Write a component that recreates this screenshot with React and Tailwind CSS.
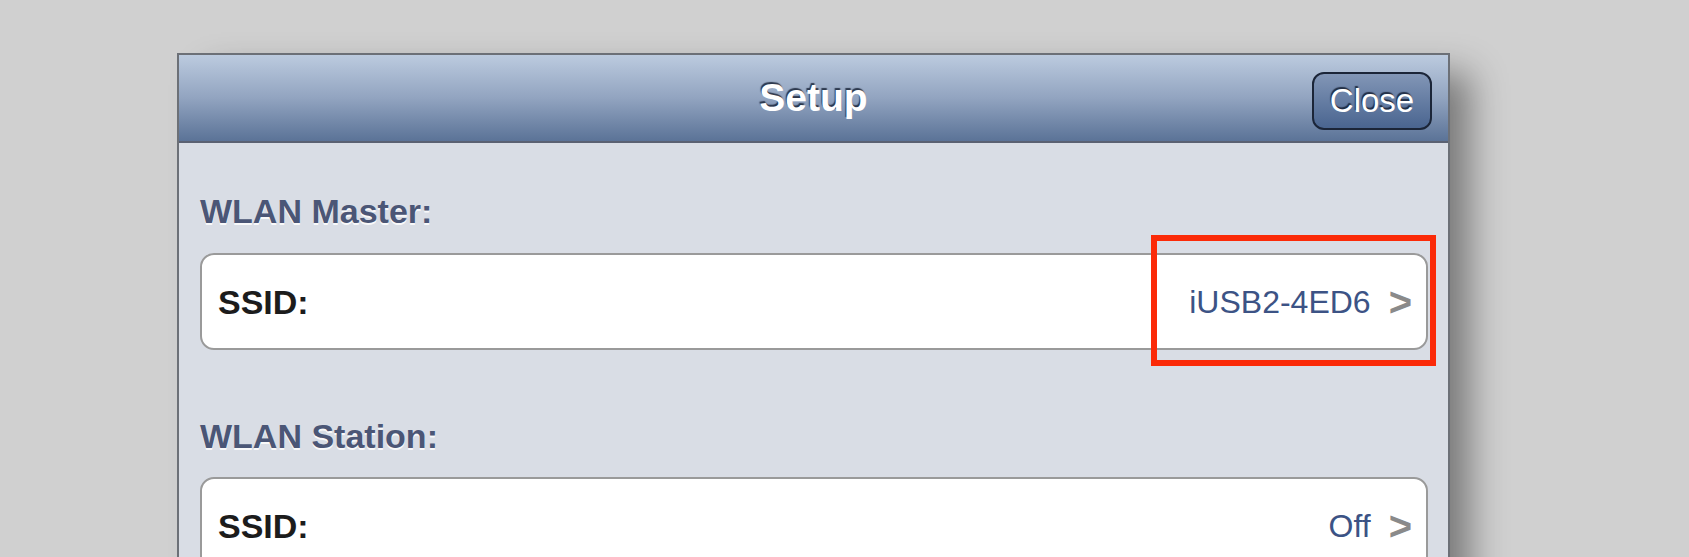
import React from "react";

function Row({ value, highlight }) {
  return (
    <div className="relative flex h-[97px] items-center rounded-[14px] border-2 border-[#9a9a9a] bg-white pl-[16px] pr-[14px]">
      <span className="text-[34px] font-bold leading-[38px] text-[#1c1c1c]">SSID:</span>
      <div className="flex-1" />
      <span className="text-[32px] leading-[38px] text-[#3c5385]">{value}</span>
      <span className="ml-[18px] text-[40px] font-bold leading-[38px] text-[#8a8a8a]">&gt;</span>
      {highlight && (
        <div className="pointer-events-none absolute right-[-10px] top-[-20px] bottom-[-18px] w-[285px] border-[6px] border-[#fb2a08]" />
      )}
    </div>
  );
}

export default function App() {
  return (
    <div className="h-[557px] w-full overflow-hidden bg-[#d0d0d0] pt-[53px] font-['Liberation_Sans',Arial,sans-serif]">
      <div className="ml-[177px] h-[600px] w-[1273px] border-2 border-[#6c7077] bg-[#d9dde5] shadow-[26px_14px_34px_-6px_rgba(0,0,0,0.42)]">
        <div className="relative flex h-[88px] items-center justify-center border-b-2 border-[#5a6172] bg-gradient-to-b from-[#bccbdf] via-[#92a4c0] to-[#5b7397]">
          <span className="text-[39px] font-bold leading-[44px] text-white [text-shadow:-1px_-2px_1px_rgba(25,35,55,0.85)]">
            Setup
          </span>
          <button className="absolute right-[16px] top-[17px] flex h-[58px] w-[120px] items-center justify-center rounded-[12px] border-2 border-[#1b2538] bg-gradient-to-b from-[#8296b6] to-[#4a6590] text-[33px] leading-[38px] text-white [text-shadow:-1px_-2px_1px_rgba(20,30,50,0.85)]">
            Close
          </button>
        </div>
        <div className="pl-[21px] pr-[20px] pt-[49px]">
          <div className="text-[34px] font-bold leading-[38px] text-[#4b5676] [text-shadow:0_2px_0_rgba(255,255,255,0.85)]">
            WLAN Master:
          </div>
          <div className="mt-[23px]">
            <Row value="iUSB2-4ED6" highlight />
          </div>
          <div className="mt-[67px] text-[34px] font-bold leading-[38px] text-[#4b5676] [text-shadow:0_2px_0_rgba(255,255,255,0.85)]">
            WLAN Station:
          </div>
          <div className="mt-[22px]">
            <Row value="Off" />
          </div>
        </div>
      </div>
    </div>
  );
}
